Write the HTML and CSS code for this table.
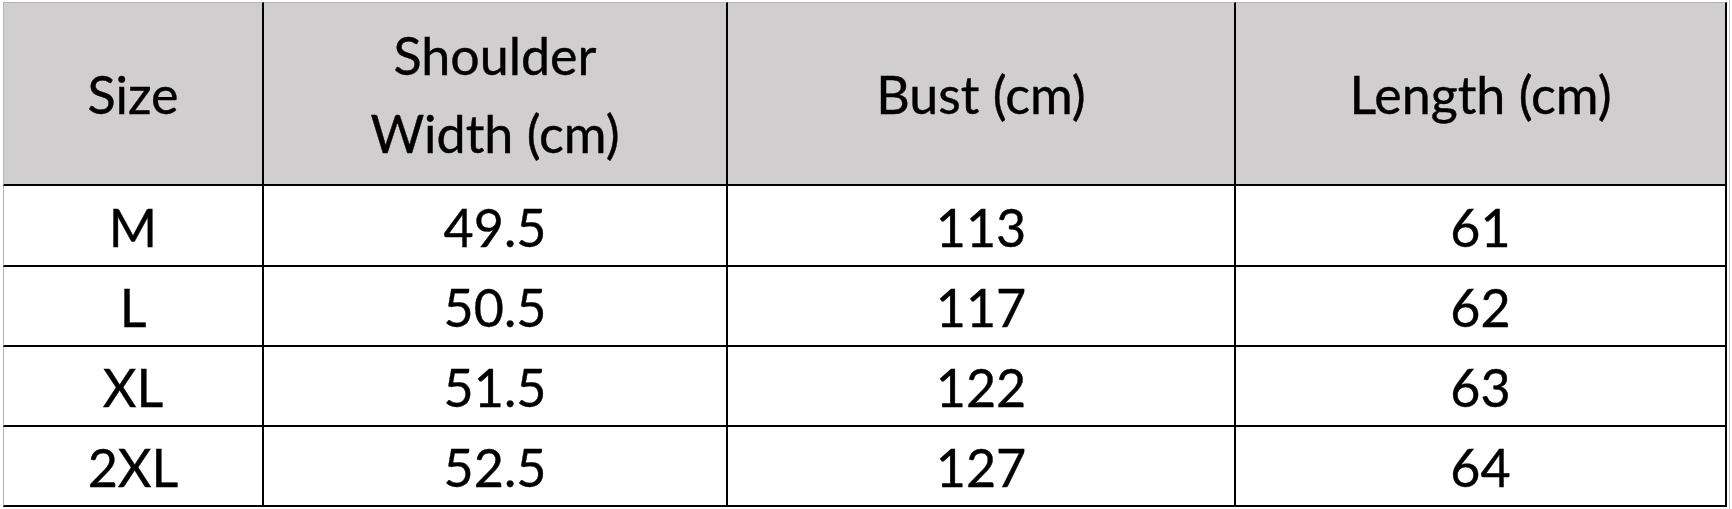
FILE: index.html
```html
<!DOCTYPE html>
<html lang="en">
<head>
<meta charset="utf-8">
<title>Size chart</title>
<link rel="stylesheet" href="styles.css">
</head>
<body>
<div class="sheet">
  <table class="chart">
    <thead>
      <tr>
        <th class="c1">Size</th>
        <th class="c2">Shoulder<br>Width (cm)</th>
        <th class="c3">Bust (cm)</th>
        <th class="c4">Length (cm)</th>
      </tr>
    </thead>
    <tbody>
      <tr class="first"><td class="c1">M</td><td class="c2">49.5</td><td class="c3">113</td><td class="c4">61</td></tr>
      <tr><td class="c1">L</td><td class="c2">50.5</td><td class="c3">117</td><td class="c4">62</td></tr>
      <tr><td class="c1">XL</td><td class="c2">51.5</td><td class="c3">122</td><td class="c4">63</td></tr>
      <tr><td class="c1">2XL</td><td class="c2">52.5</td><td class="c3">127</td><td class="c4">64</td></tr>
    </tbody>
  </table>
</div>
</body>
</html>
```
FILE: styles.css
```css
html, body {
  margin: 0;
  padding: 0;
  background: #ffffff;
}
body {
  font-family: Lato, "Open Sans", "Liberation Sans", sans-serif;
  color: #000000;
}
.sheet {
  display: inline-block;
  padding: 2px 2px 2px 3px;
  border-right: 1px solid #c6c6c6;
  border-bottom: 1px solid #c6c6c6;
}
.chart {
  border-collapse: separate;
  border-spacing: 0;
  table-layout: fixed;
}
.chart th,
.chart td {
  padding: 0;
  text-align: center;
  vertical-align: middle;
  font-size: 52px;
  font-weight: 400;
  border-right: 2px solid #000000;
  border-bottom: 2px solid #000000;
  box-sizing: content-box;
  -webkit-text-stroke: 0.4px #000000;
}
.chart th {
  background: #d0cece;
  height: 181px;
  line-height: 78px;
  border-top: 1px solid #b4b4b4;
}
.chart td {
  height: 78px;
  line-height: 60px;
  padding-top: 2px;
  height: 76px;
}
.chart tr.first td {
  height: 77px;
}
.chart .c1 {
  width: 258px;
  border-left: 1px solid #b4b4b4;
}
.chart .c2 { width: 462px; }
.chart .c3 { width: 506px; }
.chart .c4 { width: 489px; }
```
